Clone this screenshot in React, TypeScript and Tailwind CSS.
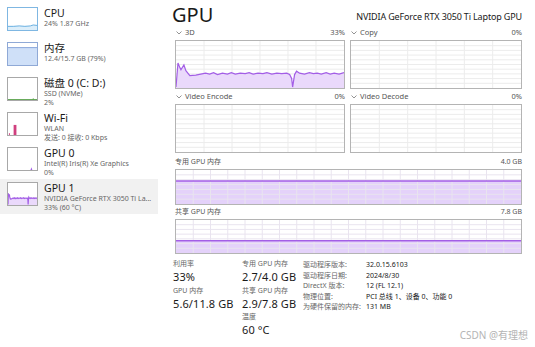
import React from "react";

const FONT = { fontFamily: '"Noto Sans", "Noto Sans CJK SC", sans-serif' };

type Pt = [number, number];

const GPU_3D: Pt[] = [
  [0, 48], [2, 23], [4, 28], [5, 30], [8, 25], [10, 31], [14, 36], [20, 35.5], [25, 34.5], [30, 33.5],
  [34, 34.5], [38, 33], [42, 35], [47, 33.5], [52, 34.5], [56, 33], [60, 34.5], [65, 33.5], [70, 34],
  [74, 33], [78, 34.5], [83, 33.5], [88, 34], [92, 33], [97, 34.5], [102, 33.5], [107, 34], [112, 33.5],
  [115, 35], [117, 39], [118, 48], [120, 35], [122, 31.5], [125, 33.5], [130, 34.5], [135, 33], [139, 34],
  [143, 33.5], [147, 34.5], [152, 33], [156, 34.5], [160, 33.5], [165, 34.5], [170, 33],
];

function GridLines({ w, h, cols, rows, color = "#ececec" }: { w: number; h: number; cols: number; rows: number; color?: string }) {
  const lines = [];
  for (let i = 1; i < cols; i++) {
    const x = (w / cols) * i;
    lines.push(<line key={"c" + i} x1={x} y1={0} x2={x} y2={h} stroke={color} strokeWidth={1} vectorEffect="non-scaling-stroke" />);
  }
  for (let j = 1; j < rows; j++) {
    const y = (h / rows) * j;
    lines.push(<line key={"r" + j} x1={0} y1={y} x2={w} y2={y} stroke={color} strokeWidth={1} vectorEffect="non-scaling-stroke" />);
  }
  return <>{lines}</>;
}

function LineChart({ points, w, h }: { points: Pt[]; w: number; h: number }) {
  const line = points.map((p) => p.join(",")).join(" ");
  const area = `0,${h} ${line} ${w},${h}`;
  return (
    <>
      <polygon points={area} fill="#ead9fb" />
      <polyline points={line} fill="none" stroke="#a35ee6" strokeWidth={1.2} vectorEffect="non-scaling-stroke" />
    </>
  );
}

function GraphCell({ label, value, points }: { label: string; value: string; points?: Pt[] }) {
  return (
    <div className="flex flex-col">
      <div className="flex h-[14px] items-center justify-between text-[7.5px] text-[#555]">
        <span className="flex items-center gap-[3px] pl-[1px]">
          <svg width="6" height="4" viewBox="0 0 6 4">
            <path d="M0.5 0.5 L3 3 L5.5 0.5" fill="none" stroke="#777" strokeWidth="0.8" />
          </svg>
          {label}
        </span>
        <span>{value}</span>
      </div>
      <div className="h-[49px] border border-[#b4b4b4] bg-white">
        <svg className="block h-full w-full" viewBox="0 0 170 49" preserveAspectRatio="none">
          <GridLines w={170} h={49} cols={6} rows={10} />
          {points && <LineChart points={points} w={170} h={49} />}
        </svg>
      </div>
    </div>
  );
}

function MemBar({ label, total, frac, height }: { label: string; total: string; frac: number; height: string }) {
  const h = 35;
  const top = h * (1 - frac);
  return (
    <div className="flex flex-col">
      <div className="flex h-[14px] items-center justify-between text-[7px] text-[#555]">
        <span>{label}</span>
        <span>{total}</span>
      </div>
      <div className={`${height} border border-[#b4b4b4] bg-white`}>
        <svg className="block h-full w-full" viewBox={`0 0 347 ${h}`} preserveAspectRatio="none">
          <rect x={0} y={top} width={347} height={h - top} fill="#e4d2fa" />
          <GridLines w={347} h={h} cols={20} rows={7} color="#e9e4ef" />
          <line x1={0} y1={top} x2={347} y2={top} stroke="#a35ee6" strokeWidth={1.5} vectorEffect="non-scaling-stroke" />
        </svg>
      </div>
    </div>
  );
}

function Thumb({ children, border }: { children?: React.ReactNode; border: string }) {
  return (
    <div className={`h-[24px] w-[31px] shrink-0 border ${border} bg-white`}>
      <svg className="block h-full w-full" viewBox="0 0 31 24" preserveAspectRatio="none">
        {children}
      </svg>
    </div>
  );
}

const SMALL_3D: Pt[] = GPU_3D.map(([x, y]) => [(x / 170) * 31, (y / 49) * 24] as Pt);

function SideItem({ title, lines, thumb, active }: { title: string; lines: string[]; thumb: React.ReactNode; active?: boolean }) {
  return (
    <div className={`flex h-[35px] items-start gap-[6px] pl-[7px] pt-[3px] ${active ? "bg-[#f1f1f1]" : ""}`}>
      {thumb}
      <div className="flex flex-col">
        <span className="text-[10.5px] leading-[12px] text-[#1a1a1a]">{title}</span>
        {lines.map((l) => (
          <span key={l} className="whitespace-nowrap text-[7px] leading-[9px] text-[#666]">
            {l}
          </span>
        ))}
      </div>
    </div>
  );
}

function Stat({ label, value }: { label: string; value: string }) {
  return (
    <div className="flex h-[26.5px] flex-col whitespace-nowrap">
      <span className="text-[7px] leading-[10px] text-[#666]">{label}</span>
      <span className="text-[11px] leading-[16.5px] tracking-[0.1px] text-[#1a1a1a]">{value}</span>
    </div>
  );
}

export default function App() {
  return (
    <div className="relative flex h-[347px] w-[535px] overflow-hidden bg-white" style={FONT}>
      {/* sidebar */}
      <div className="flex w-[158px] shrink-0 flex-col pt-[4px]">
        <SideItem
          title="CPU"
          lines={["24% 1.87 GHz"]}
          thumb={
            <Thumb border="border-[#7fb7e2]">
              <polygon points="0,24 0,20 6,20 12,19.5 18,20 24,19.5 27,18.5 31,19 31,24" fill="#dceefa" />
              <polyline points="0,20 6,20 12,19.5 18,20 24,19.5 27,18.5 31,19" fill="none" stroke="#3b96d6" strokeWidth="0.8" />
            </Thumb>
          }
        />
        <SideItem
          title="内存"
          lines={["12.4/15.7 GB (79%)"]}
          thumb={
            <Thumb border="border-[#8fa9d6]">
              <rect x="0" y="5" width="31" height="19" fill="#cfe0f8" />
              <line x1="0" y1="5" x2="31" y2="5" stroke="#6a8fd0" strokeWidth="0.8" />
            </Thumb>
          }
        />
        <SideItem
          title="磁盘 0 (C: D:)"
          lines={["SSD (NVMe)", "2%"]}
          thumb={
            <Thumb border="border-[#a8a8a8]">
              <line x1="0" y1="23.5" x2="31" y2="23.5" stroke="#58a14a" strokeWidth="1" />
              <line x1="27" y1="24" x2="27" y2="22" stroke="#58a14a" strokeWidth="0.8" />
            </Thumb>
          }
        />
        <SideItem
          title="Wi-Fi"
          lines={["WLAN", "发送: 0 接收: 0 Kbps"]}
          thumb={
            <Thumb border="border-[#a8a8a8]">
              <rect x="6" y="13" width="3" height="11" fill="#d0407f" />
              <rect x="1" y="22" width="1" height="2" fill="#d0407f" />
            </Thumb>
          }
        />
        <SideItem
          title="GPU 0"
          lines={["Intel(R) Iris(R) Xe Graphics", "0%"]}
          thumb={
            <Thumb border="border-[#a8a8a8]">
              <polygon points="24,24 25,21 26,24" fill="#a35ee6" />
            </Thumb>
          }
        />
        <SideItem
          active
          title="GPU 1"
          lines={["NVIDIA GeForce RTX 3050 Ti La...", "33% (60 °C)"]}
          thumb={
            <Thumb border="border-[#a8a8a8]">
              <LineChart points={SMALL_3D} w={31} h={24} />
            </Thumb>
          }
        />
      </div>

      {/* main panel */}
      <div className="flex flex-1 flex-col pl-[14px] pr-[13px] pt-[3px]">
        <div className="flex h-[23px] items-end justify-between">
          <span className="text-[20px] leading-[22px] text-[#1a1a1a]">GPU</span>
          <span className="pb-[3px] text-[9px] leading-[12px] tracking-[-0.15px] text-[#1a1a1a]">NVIDIA GeForce RTX 3050 Ti Laptop GPU</span>
        </div>

        <div className="ml-[3px] grid grid-cols-[170px_172px] gap-x-[5px] gap-y-[1px]">
          <GraphCell label="3D" value="33%" points={GPU_3D} />
          <GraphCell label="Copy" value="0%" />
          <GraphCell label="Video Encode" value="0%" />
          <GraphCell label="Video Decode" value="0%" />
        </div>

        <div className="ml-[3px] mt-[2px] flex flex-col">
          <MemBar label="专用 GPU 内存" total="4.0 GB" frac={2.7 / 4.0} height="h-[36px]" />
          <MemBar label="共享 GPU 内存" total="7.8 GB" frac={2.9 / 7.8} height="h-[35px]" />
        </div>

        <div className="mt-[5px] flex">
          <div className="flex w-[70px] flex-col pl-[1px]">
            <Stat label="利用率" value="33%" />
            <Stat label="GPU 内存" value="5.6/11.8 GB" />
          </div>
          <div className="flex w-[61px] flex-col">
            <Stat label="专用 GPU 内存" value="2.7/4.0 GB" />
            <Stat label="共享 GPU 内存" value="2.9/7.8 GB" />
            <Stat label="温度" value="60 °C" />
          </div>
          <div className="grid grid-cols-[63px_1fr] content-start pt-[1px] text-[7px] leading-[10.5px]">
            <span className="text-[#666]">驱动程序版本:</span>
            <span className="text-[#1a1a1a]">32.0.15.6103</span>
            <span className="text-[#666]">驱动程序日期:</span>
            <span className="text-[#1a1a1a]">2024/8/30</span>
            <span className="text-[#666]">DirectX 版本:</span>
            <span className="text-[#1a1a1a]">12 (FL 12.1)</span>
            <span className="text-[#666]">物理位置:</span>
            <span className="text-[#1a1a1a]">PCI 总线 1、设备 0、功能 0</span>
            <span className="text-[#666]">为硬件保留的内存:</span>
            <span className="text-[#1a1a1a]">131 MB</span>
          </div>
        </div>
      </div>

      <span className="absolute right-[7px] top-[328px] text-[10px] text-[#b4b4b4]">CSDN @有理想</span>
    </div>
  );
}
